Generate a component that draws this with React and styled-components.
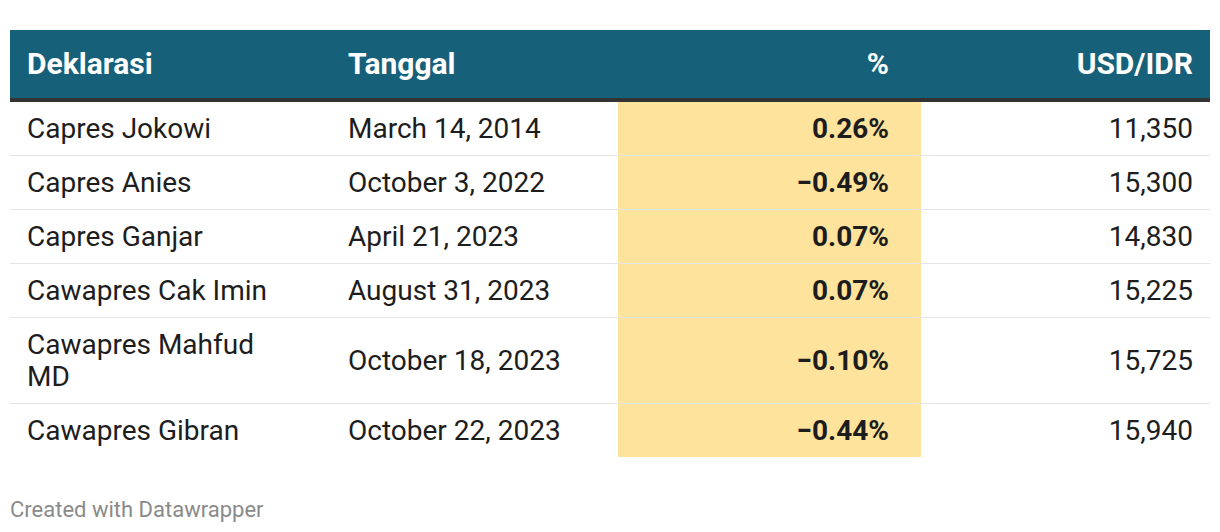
import styled, { createGlobalStyle } from 'styled-components';

const GlobalStyle = createGlobalStyle`
  body {
    margin: 0;
    background: #fff;
    font-family: Roboto, "Liberation Sans", sans-serif;
  }
`;

const Wrapper = styled.div`
  padding: 30px 10px 0;
`;

const Table = styled.table`
  width: 1200px;
  border-collapse: collapse;
  table-layout: fixed;
`;

const HeadRow = styled.tr`
  background: #17607a;
  border-bottom: 4px solid #333;
`;

const Th = styled.th`
  color: #fff;
  font-size: 30px;
  font-weight: 700;
  line-height: 32px;
  padding: 18px ${p => (p.$wide ? '32px' : '17px')} 18px 17px;
  text-align: ${p => p.$align || 'left'};
  white-space: nowrap;
`;

const Row = styled.tr`
  border-bottom: ${p => (p.$last ? 'none' : '1px solid #e5e5e5')};
`;

const Td = styled.td`
  color: #1d1d1d;
  font-size: 28px;
  line-height: 32px;
  padding: 11px 17px 10px;
  text-align: ${p => p.$align || 'left'};
  vertical-align: middle;
  font-variant-numeric: tabular-nums;
`;

const NameCell = styled(Td)`
  padding-right: 40px;
`;

const PctCell = styled(Td)`
  background: #fde39c;
  font-weight: 700;
  padding-right: 32px;
`;

const Footer = styled.div`
  margin-top: 41px;
  font-size: 22px;
  line-height: 24px;
  color: #8a8a8a;
`;

const rows = [
  { name: 'Capres Jokowi', date: 'March 14, 2014', pct: '0.26%', rate: '11,350' },
  { name: 'Capres Anies', date: 'October 3, 2022', pct: '−0.49%', rate: '15,300' },
  { name: 'Capres Ganjar', date: 'April 21, 2023', pct: '0.07%', rate: '14,830' },
  { name: 'Cawapres Cak Imin', date: 'August 31, 2023', pct: '0.07%', rate: '15,225' },
  { name: 'Cawapres Mahfud MD', date: 'October 18, 2023', pct: '−0.10%', rate: '15,725' },
  { name: 'Cawapres Gibran', date: 'October 22, 2023', pct: '−0.44%', rate: '15,940' },
];

export default function App() {
  return (
    <Wrapper>
      <GlobalStyle />
      <Table>
        <colgroup>
          <col style={{ width: 321 }} />
          <col style={{ width: 287 }} />
          <col style={{ width: 303 }} />
          <col style={{ width: 289 }} />
        </colgroup>
        <thead>
          <HeadRow>
            <Th>Deklarasi</Th>
            <Th>Tanggal</Th>
            <Th $align="right" $wide>%</Th>
            <Th $align="right">USD/IDR</Th>
          </HeadRow>
        </thead>
        <tbody>
          {rows.map((r, i) => (
            <Row key={r.name} $last={i === rows.length - 1}>
              <NameCell>{r.name}</NameCell>
              <Td>{r.date}</Td>
              <PctCell $align="right">{r.pct}</PctCell>
              <Td $align="right">{r.rate}</Td>
            </Row>
          ))}
        </tbody>
      </Table>
      <Footer>Created with Datawrapper</Footer>
    </Wrapper>
  );
}
